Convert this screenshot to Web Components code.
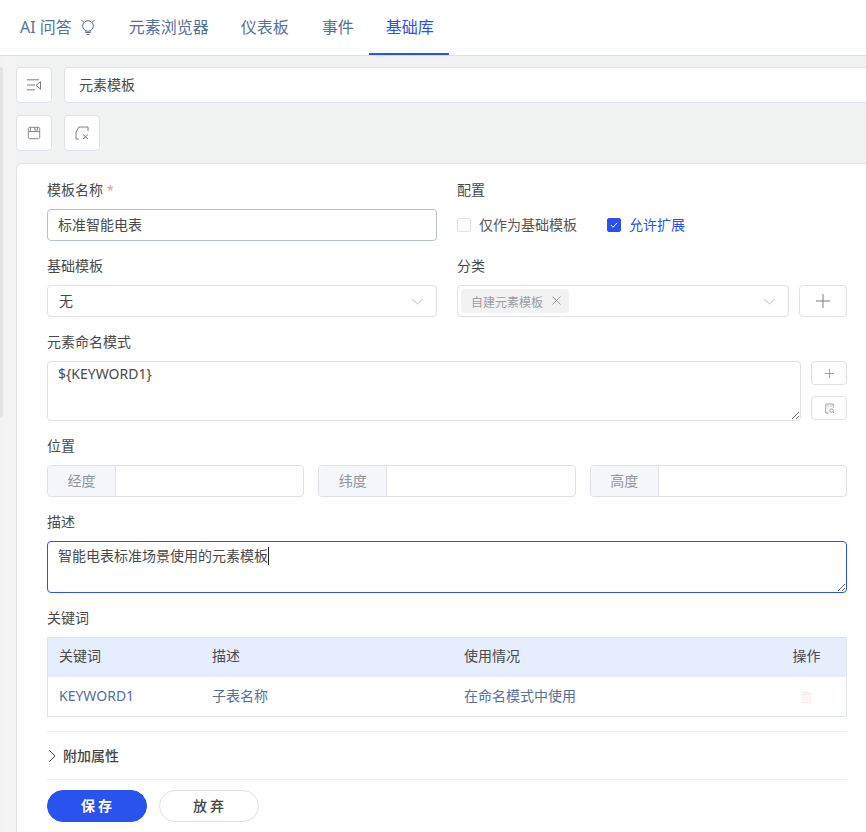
<!DOCTYPE html>
<html lang="zh">
<head>
<meta charset="utf-8">
<title>元素模板</title>
<style>
  html, body { margin: 0; height: 100%; overflow: hidden; }
  body { font: 14px/22px "Noto Sans", "Noto Sans CJK SC", sans-serif; color: #4a4a4a; background: #f1f3f3; }
</style>
</head>
<body>
<script>
  const ICONS = {
    bulb: '<circle cx="8" cy="7" r="5.3"/><path d="M1.2 1 3.8 3M14.8 1 12.2 3M5.5 12.5v1h5v-1M6.5 15.5h3"/>',
    collapse: '<path d="M1 2.8h12M1 8h8M1 12.8h8M10 8.4l4.5-3.8v7.6z"/>',
    save: '<rect x="1.5" y="1.5" width="13" height="13" rx="1.5"/><path d="M1.5 6.3h13M4 1.5v4.8M9 1.5v3.2h3V1.5"/>',
    fileX: '<path d="M5 2h9v4M5 2 2 7v7h3M9 9.5l5 4.5M14 9.5 9 14"/>',
    plus: '<path d="M8 1v14M1 8h14"/>',
    fileSearch: '<path d="M13.5 7V1.5h-11v13H7"/><path d="M5 4.5h2M5 7.5h1M9 4.5h2"/><circle cx="11" cy="11" r="2.5"/><path d="m13 13 1.5 1.5"/>',
    chevronDown: '<path d="M1.5 5 8 11l6.5-6"/>',
    chevronRight: '<path d="M5 1.5 11.5 8 5 14.5"/>',
    close: '<path d="m3 3 10 10M13 3 3 13"/>',
    check: '<path d="m3 8 3.5 3.5L13 4.5"/>',
    trash: '<path d="M2 4h12M5.5 4V1.8h5V4M3.5 4v10.5h9V4M6.5 6.5v6M9.5 6.5v6"/>'
  };

  class AppIcon extends HTMLElement {
    connectedCallback() {
      const size = this.getAttribute('size') || 16;
      const width = this.getAttribute('stroke') || 1;
      this.attachShadow({ mode: 'open' }).innerHTML = `
        <style>:host { display: inline-flex; flex: none; } svg { display: block; }</style>
        <svg width="${size}" height="${size}" viewBox="0 0 16 16" fill="none" stroke="currentColor" stroke-width="${width}">${ICONS[this.getAttribute('name')]}</svg>`;
    }
  }

  class TabBar extends HTMLElement {
    constructor() {
      super();
      this.attachShadow({ mode: 'open' }).innerHTML = `
        <style>
          :host { display: flex; height: 55px; padding-left: 4px; background: #fff; border-bottom: 1px solid #dfe1e3; }
        </style>
        <slot></slot>`;
    }
  }

  class TabItem extends HTMLElement {
    constructor() {
      super();
      this.attachShadow({ mode: 'open' }).innerHTML = `
        <style>
          :host { display: flex; align-items: center; gap: 9px; padding: 0 16px; font-size: 16px; color: #57709a; height: 53px; border-bottom: 2px solid transparent; }
          :host([active]) { margin-left: -1px; padding: 0 15px 0 17px; color: #2a52ee; border-bottom-color: #2a52ee; }
        </style>
        <slot></slot>`;
    }
  }

  class IconButton extends HTMLElement {
    connectedCallback() {
      this.attachShadow({ mode: 'open' }).innerHTML = `
        <style>
          :host { display: inline-flex; align-items: center; justify-content: center; width: 36px; height: 36px; box-sizing: border-box; background: #fff; border: 1px solid #e0e1ea; border-radius: 4px; color: #7c7c7c; }
        </style>
        <app-icon name="${this.getAttribute('icon')}" size="${this.getAttribute('size') || 16}"></app-icon>`;
    }
  }

  class FormRow extends HTMLElement {
    connectedCallback() {
      this.attachShadow({ mode: 'open' }).innerHTML = `
        <style>
          :host { display: grid; grid-template-columns: ${this.getAttribute('cols')}; column-gap: 20px; }
        </style>
        <slot></slot>`;
    }
  }

  class FormField extends HTMLElement {
    connectedCallback() {
      const star = this.hasAttribute('required') ? '<span class="star">*</span>' : '';
      this.attachShadow({ mode: 'open' }).innerHTML = `
        <style>
          :host { display: block; min-width: 0; margin-bottom: 14px; }
          .label { height: 22px; margin-bottom: 8px; color: #4a4a4a; }
          .star { color: #f78989; margin-left: 4px; font-size: 12px; }
        </style>
        <div class="label">${this.getAttribute('label')}${star}</div>
        <slot></slot>`;
    }
  }

  class TextBox extends HTMLElement {
    constructor() {
      super();
      this.attachShadow({ mode: 'open' }).innerHTML = `
        <style>
          :host { display: flex; align-items: center; height: 32px; box-sizing: border-box; padding: 0 10px; background: #fff; border: 1px solid #dfe0e9; border-radius: 4px; }
          :host([strong]) { border-color: #b9bfcb; }
        </style>
        <slot></slot>`;
    }
  }

  class SelectBox extends HTMLElement {
    constructor() {
      super();
      this.attachShadow({ mode: 'open' }).innerHTML = `
        <style>
          :host { display: flex; align-items: center; justify-content: space-between; height: 32px; box-sizing: border-box; padding: 0 12px 0 8px; background: #fff; border: 1px solid #dfe0e9; border-radius: 4px; }
          app-icon { color: #a8abb2; }
          .wrap { display: flex; align-items: center; }
        </style>
        <div class="wrap"><slot></slot></div>
        <app-icon name="chevronDown" size="13"></app-icon>`;
    }
  }

  class TagChip extends HTMLElement {
    constructor() {
      super();
      this.attachShadow({ mode: 'open' }).innerHTML = `
        <style>
          :host { display: inline-flex; align-items: center; gap: 7px; height: 24px; box-sizing: border-box; margin-left: -5px; padding: 3px 6px 0 10px; background: #f2f2f3; border-radius: 4px; font-size: 12px; color: #9b9da3; }
          app-icon { color: #85878d; margin-top: -5px; }
        </style>
        <slot></slot>
        <app-icon name="close" size="13"></app-icon>`;
    }
  }

  class CheckBox extends HTMLElement {
    connectedCallback() {
      const on = this.hasAttribute('checked');
      this.attachShadow({ mode: 'open' }).innerHTML = `
        <style>
          :host { display: inline-flex; align-items: center; gap: 8px; color: #555; }
          :host([checked]) { color: #2a52ee; }
          .box { display: flex; align-items: center; justify-content: center; width: 14px; height: 14px; box-sizing: border-box; border: 1px solid #dcdfe6; border-radius: 2px; background: #fff; color: #fff; }
          :host([checked]) .box { background: #2a52ee; border-color: #2a52ee; }
        </style>
        <span class="box">${on ? '<app-icon name="check" size="10" stroke="1.6"></app-icon>' : ''}</span>
        <slot></slot>`;
    }
  }

  class TextArea extends HTMLElement {
    connectedCallback() {
      const caret = this.hasAttribute('caret') ? '<span class="caret"></span>' : '';
      this.attachShadow({ mode: 'open' }).innerHTML = `
        <style>
          :host { display: block; box-sizing: border-box; padding: 1px 10px 0; background: #fff; border: 1px solid #dfe0e9; border-radius: 4px; overflow: auto; resize: vertical; line-height: 22px; }
          :host([focused]) { padding-top: 3px; border-color: #2a52ee; }
          .caret { display: inline-block; width: 1px; height: 18px; background: #222; vertical-align: -4px; }
        </style>
        <slot></slot>${caret}`;
    }
  }

  class AddonInput extends HTMLElement {
    connectedCallback() {
      this.attachShadow({ mode: 'open' }).innerHTML = `
        <style>
          :host { display: flex; height: 32px; box-sizing: border-box; background: #fff; border: 1px solid #dfe0e9; border-radius: 4px; overflow: hidden; }
          .addon { display: flex; align-items: center; justify-content: center; width: 68px; box-sizing: border-box; flex: none; background: #f5f7fa; border-right: 1px solid #dfe0e9; color: #909399; }
        </style>
        <div class="addon">${this.getAttribute('addon')}</div>`;
    }
  }

  class KeyTable extends HTMLElement {
    connectedCallback() {
      this.attachShadow({ mode: 'open' }).innerHTML = `
        <style>
          :host { display: block; border: 1px solid #e0e5ee; }
          .row { display: grid; grid-template-columns: 152px 252px 1fr 79px; height: 39px; box-sizing: border-box; align-items: center; }
          .row > div { padding-left: 12px; }
          .row > div:first-child { padding-left: 11px; }
          .head { background: #e6edfc; color: #4a4a4a; padding-bottom: 3px; }
          .body { color: #55709b; padding-bottom: 1px; }
          .row > .op { padding: 0; display: flex; justify-content: center; }
          app-icon { color: #fbdede; margin-top: 3px; }
        </style>
        <div class="row head"><div>关键词</div><div>描述</div><div>使用情况</div><div class="op">操作</div></div>
        <div class="row body"><div>KEYWORD1</div><div>子表名称</div><div>在命名模式中使用</div><div class="op"><app-icon name="trash" size="13"></app-icon></div></div>`;
    }
  }

  class CollapseRow extends HTMLElement {
    constructor() {
      super();
      this.attachShadow({ mode: 'open' }).innerHTML = `
        <style>
          :host { display: flex; align-items: center; gap: 4px; height: 47px; margin-top: 14px; border-top: 1px solid #ebeef0; border-bottom: 1px solid #ebeef0; font-weight: 500; color: #444; }
          app-icon { color: #444; margin-left: -2px; }
        </style>
        <app-icon name="chevronRight" size="14" stroke="1.1"></app-icon>
        <slot></slot>`;
    }
  }

  class PillButton extends HTMLElement {
    constructor() {
      super();
      this.attachShadow({ mode: 'open' }).innerHTML = `
        <style>
          :host { display: inline-flex; align-items: center; justify-content: center; width: 100px; height: 32px; box-sizing: border-box; padding-left: 2px; border: 1px solid #dfe0e9; border-radius: 16px; background: #fff; color: #444; font-weight: 500; letter-spacing: 3px; }
          :host([primary]) { background: #2a52ee; border-color: #2a52ee; color: #fff; font-weight: 700; }
        </style>
        <slot></slot>`;
    }
  }

  class FormCard extends HTMLElement {
    constructor() {
      super();
      this.attachShadow({ mode: 'open' }).innerHTML = `
        <style>
          :host { display: block; margin-right: -12px; padding: 15px 30px 20px 30px; background: #fff; border: 1px solid #e0e1ea; border-radius: 6px 0 0 0; }
        </style>
        <slot></slot>`;
    }
  }

  class EditorPane extends HTMLElement {
    constructor() {
      super();
      this.attachShadow({ mode: 'open' }).innerHTML = `
        <style>
          :host { display: flex; flex-direction: column; gap: 12px; padding: 11px 0 0 16px; min-width: 0; overflow: hidden; background: #f1f3f3; }
          .rail { position: absolute; left: 0; top: 67px; width: 3px; height: 350px; background: #e3e3e3; border-radius: 0 3px 3px 0; }
          .gutter { position: absolute; left: 3px; top: 56px; bottom: 0; width: 13px; background: #f4f4f4; }
          ::slotted(*) { position: relative; }
        </style>
        <div class="gutter"></div>
        <div class="rail"></div>
        <slot></slot>`;
    }
  }

  class TitleInput extends HTMLElement {
    constructor() {
      super();
      this.attachShadow({ mode: 'open' }).innerHTML = `
        <style>
          :host { display: flex; align-items: center; flex: 1; height: 36px; box-sizing: border-box; margin-right: -12px; padding: 0 14px; background: #fff; border: 1px solid #e0e1ea; border-radius: 4px 0 0 4px; }
        </style>
        <slot></slot>`;
    }
  }

  customElements.define('app-icon', AppIcon);
  customElements.define('tab-bar', TabBar);
  customElements.define('tab-item', TabItem);
  customElements.define('icon-button', IconButton);
  customElements.define('form-row', FormRow);
  customElements.define('form-field', FormField);
  customElements.define('text-box', TextBox);
  customElements.define('select-box', SelectBox);
  customElements.define('tag-chip', TagChip);
  customElements.define('check-box', CheckBox);
  customElements.define('text-area', TextArea);
  customElements.define('addon-input', AddonInput);
  customElements.define('key-table', KeyTable);
  customElements.define('collapse-row', CollapseRow);
  customElements.define('pill-button', PillButton);
  customElements.define('form-card', FormCard);
  customElements.define('editor-pane', EditorPane);
  customElements.define('title-input', TitleInput);
</script>

<tab-bar>
  <tab-item>AI 问答 <app-icon name="bulb" size="16" style="margin:0 1px 0 -1px"></app-icon></tab-item>
  <tab-item>元素浏览器</tab-item>
  <tab-item>仪表板</tab-item>
  <tab-item style="margin-left:1px">事件</tab-item>
  <tab-item active>基础库</tab-item>
</tab-bar>
<editor-pane>
  <div style="display:flex;gap:12px">
    <icon-button icon="collapse" size="16"></icon-button>
    <title-input>元素模板</title-input>
  </div>
  <div style="display:flex;gap:12px">
    <icon-button icon="save" size="14"></icon-button>
    <icon-button icon="fileX" size="16"></icon-button>
  </div>
  <form-card>
    <form-row cols="1fr 1fr">
      <form-field label="模板名称" required>
        <text-box strong>标准智能电表</text-box>
      </form-field>
      <form-field label="配置">
        <div style="display:flex;gap:30px;height:32px;align-items:center">
          <check-box>仅作为基础模板</check-box>
          <check-box checked>允许扩展</check-box>
        </div>
      </form-field>
    </form-row>
    <form-row cols="1fr 1fr">
      <form-field label="基础模板">
        <select-box><span style="padding-left:3px">无</span></select-box>
      </form-field>
      <form-field label="分类">
        <div style="display:flex;gap:10px">
          <select-box style="flex:1"><tag-chip>自建元素模板</tag-chip></select-box>
          <icon-button icon="plus" size="16" style="width:48px;height:32px"></icon-button>
        </div>
      </form-field>
    </form-row>
    <form-field label="元素命名模式">
      <div style="display:flex;gap:10px">
        <text-area style="flex:1;height:60px">${KEYWORD1}</text-area>
        <div style="display:flex;flex-direction:column;justify-content:space-between;padding-bottom:1px">
          <icon-button icon="plus" size="11" style="width:36px;height:24px"></icon-button>
          <icon-button icon="fileSearch" size="11" style="width:36px;height:24px"></icon-button>
        </div>
      </div>
    </form-field>
    <form-field label="位置">
      <div style="display:grid;grid-template-columns:1fr 1fr 1fr;gap:14px">
        <addon-input addon="经度"></addon-input>
        <addon-input addon="纬度"></addon-input>
        <addon-input addon="高度"></addon-input>
      </div>
    </form-field>
    <form-field label="描述">
      <text-area focused caret style="height:52px">智能电表标准场景使用的元素模板</text-area>
    </form-field>
    <form-field label="关键词" style="margin-bottom:0">
      <key-table></key-table>
    </form-field>
    <collapse-row>附加属性</collapse-row>
    <div style="display:flex;gap:12px;margin-top:10px">
      <pill-button primary>保存</pill-button>
      <pill-button>放弃</pill-button>
    </div>
  </form-card>
</editor-pane>
</body>
</html>
